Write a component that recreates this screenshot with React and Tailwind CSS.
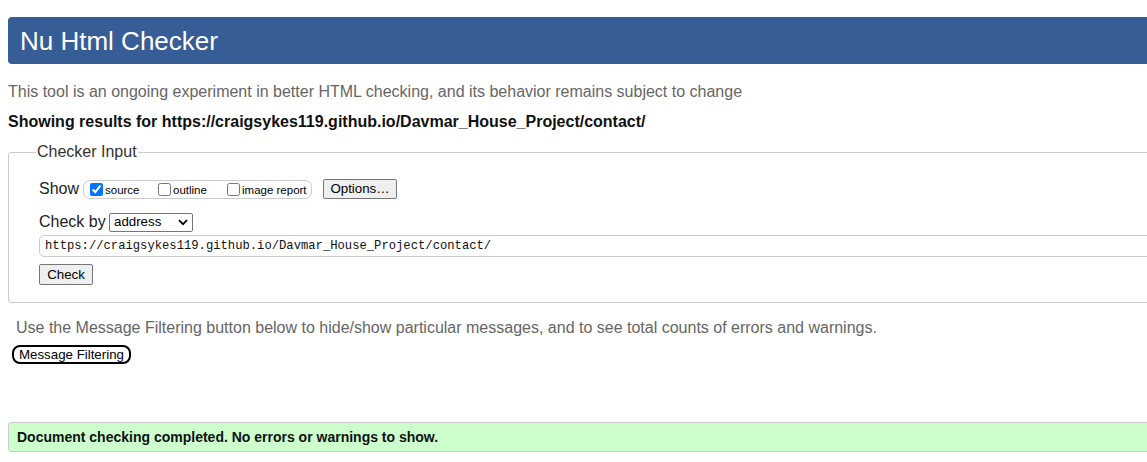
import React from 'react';

const ChevronDown = () => (
    <svg width="10" height="7" viewBox="0 0 10 7" className="ml-auto">
        <path d="M1 1.2 L5 5.2 L9 1.2" fill="none" stroke="#000" strokeWidth="1.8" />
    </svg>
);

const Check = ({ label, checked }) => (
    <label className="flex items-center gap-[2px]">
        <input type="checkbox" defaultChecked={checked} className="m-0 w-[13px] h-[13px] accent-[#0075ff]" />
        <span className="text-[11.5px] leading-none pt-[3px]">{label}</span>
    </label>
);

const App = () => {
    return (
        <div className="w-full h-[462px] overflow-hidden bg-white text-black font-['Liberation_Sans',Arial,sans-serif]">
            <div className="w-[1175px] pl-2 pt-[17px]">
                {/* page header */}
                <div className="h-[47px] flex items-center pl-[12px] bg-[#365d95] rounded-[4px]">
                    <h1 className="text-[26px] text-white leading-none">Nu Html Checker</h1>
                </div>

                <p className="mt-[19px] text-[16px] leading-[18px] text-[#666]">This tool is an ongoing experiment in better HTML checking, and its behavior remains subject to change</p>
                <p className="mt-[12px] text-[16px] leading-[18px] font-bold text-[#111]">Showing results for https://craigsykes119.github.io/Davmar_House_Project/contact/</p>

                <fieldset className="mt-[12px] border border-[#ccc] rounded-[3px] pl-[30px] pb-[17px]">
                    <legend className="-ml-[3px] px-[1px] text-[16px] leading-[18px] text-[#333]">Checker Input</legend>

                    <div className="flex items-center mt-[18px] h-[20px]">
                        <span className="text-[16px] text-[#222] w-[44px]">Show</span>
                        <div className="flex items-center h-[19px] w-[229px] border border-[#ccc] rounded-[7px] pl-[6px]">
                            <div className="w-[68px]"><Check label="source" checked /></div>
                            <div className="w-[69px]"><Check label="outline" /></div>
                            <Check label="image report" />
                        </div>
                        <button className="ml-[11px] h-[20px] w-[74px] border border-[#767676] rounded-[2px] bg-[#efefef] text-[13.3px] leading-none">Options…</button>
                    </div>

                    <div className="flex items-center mt-[14px] h-[18px]">
                        <span className="text-[16px] text-[#222] w-[70px]">Check by</span>
                        <div className="flex items-center h-[19px] w-[84px] border border-[#767676] rounded-[2px] pl-[4px] pr-[4px] text-[13.3px]">
                            address
                            <ChevronDown />
                        </div>
                    </div>

                    <div className="mt-[4px] h-[22px] border border-[#ccc] rounded-[5px] flex items-center pl-[5px] font-['Liberation_Mono',monospace] text-[12.2px] text-[#111]">
                        https://craigsykes119.github.io/Davmar_House_Project/contact/
                    </div>

                    <button className="mt-[7px] block h-[21px] w-[54px] border border-[#767676] rounded-[2px] bg-[#efefef] text-[13.3px] leading-none">Check</button>
                </fieldset>

                <p className="mt-[16px] ml-[8px] text-[16px] leading-[18px] text-[#666]">Use the Message Filtering button below to hide/show particular messages, and to see total counts of errors and warnings.</p>
                <button className="mt-[8px] ml-[4px] block h-[19px] px-[5px] border-2 border-black rounded-[8px] bg-white text-[13.3px] leading-none">Message Filtering</button>

                <div className="mt-[58px] h-[30px] bg-[#ccffcc] border border-[#ccc] rounded-[3px] flex items-center pl-[8px]">
                    <span className="text-[14px] font-bold text-[#111]">Document checking completed. No errors or warnings to show.</span>
                </div>
            </div>
        </div>
    );
};

export default App;
